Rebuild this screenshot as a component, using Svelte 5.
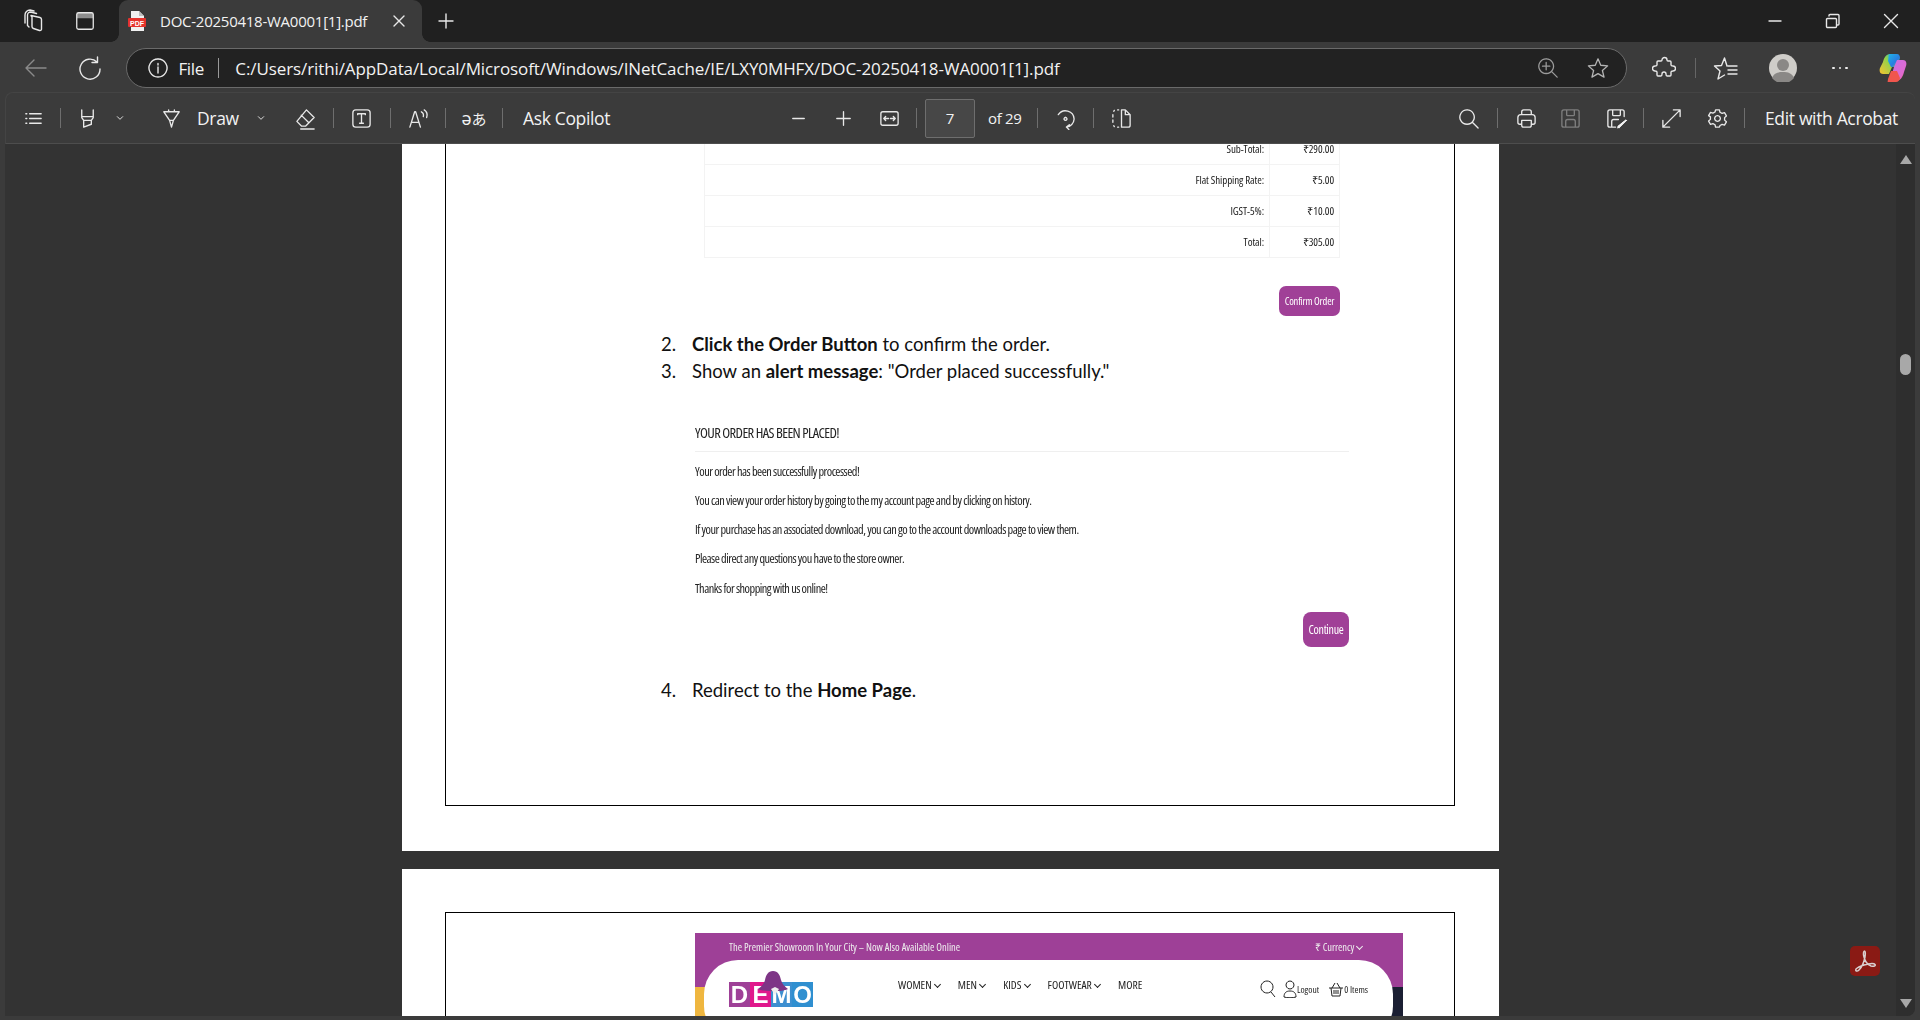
<script>
  const paths = {
    list: "M8 7h12M8 12h12M8 17h12M4 7h1M4 12h1M4 17h1",
    hl: "M6 3v8l2 3h8l2-3V3M6 10h12M8 14v7l8-3v-4",
    chev: "M8 10l4 4 4-4",
    draw: "M4 5h16M4 5l6 9h4l6-9M10 14l2 7 2-7M9 5V3M15 5V3",
    eraser: "M13 3l8 8-9 9H8l-5-5zM7.500 8.500l8 8M7 23h14",
    tbox: "M6 3h12a3 3 0 0 1 3 3v12a3 3 0 0 1-3 3H6a3 3 0 0 1-3-3V6a3 3 0 0 1 3-3zM8 8V7h8v1M12 7v10M10 17h4",
    read: "M3 21l5-16h1l5 16M5 16h7M15 5c2 1 2.500 3 2 5M18 3c3 2 3.500 5 2.500 8",
    minus: "M6 12h12",
    plus: "M5 12h14M12 5v14",
    fit: "M5 5h14a2 2 0 0 1 2 2v10a2 2 0 0 1-2 2H5a2 2 0 0 1-2-2V7a2 2 0 0 1 2-2zM6 12h5M6 12l2-2M6 12l2 2M18 12h-5M18 12l-2-2M18 12l-2 2",
    rotate: "M4.500 8a9 9 0 0 1 16.500 4.500 9 9 0 0 1-8 8.500M13 21l3-2.500M13 21l2.500 2.500M12 11a1.500 1.500 0 1 0 .01 0",
    two: "M12 3h4l5 5v11a2 2 0 0 1-2 2h-7zM16 3v5h5M12 3v18M8 3h1M4.500 3.500 4 4.500M3 8v2.500M3 13.500V16M4 19.500l.5 1M8 21h1",
    search: "M10.500 3a7.500 7.500 0 1 0 .01 0M16 16l6 6",
    print: "M7 8V5a2 2 0 0 1 2-2h6a2 2 0 0 1 2 2v3M7 18H5a2 2 0 0 1-2-2v-5a3 3 0 0 1 3-3h12a3 3 0 0 1 3 3v5a2 2 0 0 1-2 2h-2M7 14h10v5a2 2 0 0 1-2 2H9a2 2 0 0 1-2-2z",
    save: "M5 3h14a2 2 0 0 1 2 2v14a2 2 0 0 1-2 2H5a2 2 0 0 1-2-2V5a2 2 0 0 1 2-2zM8 3v5a1 1 0 0 0 1 1h6a1 1 0 0 0 1-1V3M7 21v-6a2 2 0 0 1 2-2h6a2 2 0 0 1 2 2v6",
    saveas: "M11 21H5a2 2 0 0 1-2-2V5a2 2 0 0 1 2-2h13a2 2 0 0 1 2 2v5M8 3v5a1 1 0 0 0 1 1h6a1 1 0 0 0 1-1V3M7 21v-6a2 2 0 0 1 2-2h5",
    expand: "M14 3h7v7M21 3L3 21M3 14v7h7",
    gear: "M10 3h4l.6 2.500 2.200 1.200 2.500-.8 2 3.400-1.900 1.800v2.600l1.900 1.800-2 3.400-2.500-.8-2.200 1.200L14 21h-4l-.6-2.500-2.200-1.200-2.500.8-2-3.400 1.900-1.800v-2.600L2.700 9l2-3.400 2.500.8 2.200-1.200zM12 9a3 3 0 1 0 .01 0"
  };

  const left = [
    { i: "list", w: 54 }, { s: 1 }, { i: "hl", w: 52 }, { i: "chev", w: 14, sm: 1 }, { g: 18 }, { i: "draw", w: 52 },
    { t: "Draw", w: 42 }, { i: "chev", w: 43, sm: 1 }, { i: "eraser", w: 46 }, { g: 5 }, { s: 1 }, { i: "tbox", w: 54 },
    { g: 2 }, { s: 1 }, { i: "read", w: 54 }, { s: 1 }, { x: "ə", w: 56 }, { s: 1 }, { g: 20 }, { t: "Ask Copilot", w: 88 }
  ];
  const center = [
    { i: "minus", w: 44 }, { i: "plus", w: 46 }, { i: "fit", w: 46 }, { g: 4 }, { s: 1 }, { g: 8 }, { box: "7" }, { g: 13 },
    { t: "of 29", w: 35, small: 1 }, { g: 14 }, { s: 1 }, { i: "rotate", w: 54 }, { g: 1 }, { s: 1 }, { i: "two", w: 54 }
  ];
  const right = [
    { i: "search", w: 44 }, { g: 7 }, { s: 1 }, { i: "print", w: 56 }, { i: "save", w: 32, dim: 1 }, { g: 3 }, { i: "saveas", w: 54 },
    { s: 1 }, { i: "expand", w: 54 }, { i: "gear", w: 38 }, { g: 8 }, { s: 1 }, { g: 20 }, { t: "Edit with Acrobat", w: 133 }
  ];
  const groups = [
    { cls: "left", items: left },
    { cls: "center", items: center },
    { cls: "right", items: right }
  ];

  const totals = [
    { label: "Sub-Total:", value: "₹290.00" },
    { label: "Flat Shipping Rate:", value: "₹5.00" },
    { label: "IGST-5%:", value: "₹10.00" },
    { label: "Total:", value: "₹305.00" }
  ];
  const nav = ["WOMEN", "MEN", "KIDS", "FOOTWEAR"];
</script>

{#snippet icon(name, size = 23)}
  <svg class="ico" width={size} height={size} viewBox="0 0 24 24">
    <path d={paths[name]} />
    {#if name === "saveas"}
      <path class="pen" d="M22 12.500l1.500 1.500-8.500 8.500-3 .5.5-3z" />
    {/if}
  </svg>
{/snippet}

<div class="browser">
  <div class="tabstrip">
    <div class="strip-btn">
      <svg class="ico" width="24" height="24" viewBox="0 0 24 24">
        <path d="M10 6.500l9 2a2 2 0 0 1 1.500 2v9.500a1.500 1.500 0 0 1-2 1.500l-6-2a2 2 0 0 1-1.500-2V7.500a1 1 0 0 1-1-1zM8 18l-1.500-1.500V6a3 3 0 0 1 3-3l6 1.500M4 14V6a5 5 0 0 1 5-5l4 1" />
      </svg>
    </div>
    <div class="strip-btn">
      <svg class="ico" width="22" height="22" viewBox="0 0 24 24">
        <path class="band" d="M3 5a2 2 0 0 1 2-2h14a2 2 0 0 1 2 2v4H3z" />
        <path d="M5 3h14a2 2 0 0 1 2 2v14a2 2 0 0 1-2 2H5a2 2 0 0 1-2-2V5a2 2 0 0 1 2-2z" />
      </svg>
    </div>
    <div class="tab">
      <svg class="pdf" width="18" height="20" viewBox="0 0 18 20">
        <path d="M3 0h8l5 5v15H3z" fill="#f1f1f1" />
        <path d="M11 0l5 5h-5z" fill="#bdbdbd" />
        <rect x="0" y="7" width="18" height="9" rx="1" fill="#e5322d" />
        <text x="9" y="14.500">PDF</text>
      </svg>
      <span class="tab-title">DOC-20250418-WA0001[1].pdf</span>
      <svg class="ico tab-x" width="14" height="14" viewBox="0 0 14 14"><path d="M2 2l10 10M12 2L2 12" /></svg>
    </div>
    <div class="new-tab">{@render icon("plus", 24)}</div>
    <div class="win">
      <div class="win-btn"><svg class="ico" width="16" height="16" viewBox="0 0 16 16"><path d="M2 8h12" /></svg></div>
      <div class="win-btn"><svg class="ico" width="16" height="16" viewBox="0 0 16 16"><path d="M2.500 5.500h8a1 1 0 0 1 1 1v7a1 1 0 0 1-1 1h-8a1 1 0 0 1-1-1v-7a1 1 0 0 1 1-1zM4 3V2.500a1 1 0 0 1 1-1h8a1 1 0 0 1 1 1V11a1 1 0 0 1-1 1h-.5" /></svg></div>
      <div class="win-btn"><svg class="ico" width="16" height="16" viewBox="0 0 16 16"><path d="M1.500 1.500l13 13M14.500 1.500l-13 13" /></svg></div>
    </div>
  </div>

  <div class="addressbar">
    <div class="nav-btn dim">
      <svg class="ico" width="24" height="24" viewBox="0 0 24 24"><path d="M23 12H3M11 4l-8 8 8 8" /></svg>
    </div>
    <div class="nav-btn">
      <svg class="ico" width="24" height="24" viewBox="0 0 24 24"><path d="M19 6a10 10 0 1 0 3 7M19.500 1v5.500H14" /></svg>
    </div>
    <div class="pill">
      <svg class="ico info" width="20" height="20" viewBox="0 0 20 20"><path d="M10 1a9 9 0 1 0 .01 0M10 9v6M10 5.500v1.500" /></svg>
      <span class="file">File</span>
      <span class="pill-sep"></span>
      <span class="url">C:/Users/rithi/AppData/Local/Microsoft/Windows/INetCache/IE/LXY0MHFX/DOC-20250418-WA0001[1].pdf</span>
      <svg class="ico pill-ico" width="22" height="22" viewBox="0 0 24 24"><path d="M10 2a8 8 0 1 0 .01 0M10 6v8M6 10h8M16 16l6 6" /></svg>
      <svg class="ico pill-ico star" width="22" height="22" viewBox="0 0 24 24"><path d="M12 2l3 7 7.500.7-5.700 5 1.800 7.300-6.600-3.900L5.400 22l1.800-7.300-5.700-5L9 9z" /></svg>
    </div>
    <div class="profile">
      <div class="ext">
        <svg class="ico" width="24" height="24" viewBox="0 0 24 24"><path d="M10 4a2.500 2.500 0 0 1 5 0c0 1 0 1 1 1h2a1 1 0 0 1 1 1v3c0 1 1 1 2 1a2.500 2.500 0 0 1 0 5c-1 0-2 0-2 1v3a1 1 0 0 1-1 1h-3c-1 0-1-1-1-2a2 2 0 0 0-4 0c0 1 0 2-1 2H6a1 1 0 0 1-1-1v-3c0-1-1-1-2-1a2.500 2.500 0 0 1 0-5c1 0 2 0 2-1V6a1 1 0 0 1 1-1h3c1 0 1 0 1-1z" /></svg>
      </div>
      <span class="ext-sep"></span>
      <div class="fav">
        <svg class="ico" width="26" height="26" viewBox="0 0 26 26"><path d="M14 11l-2.500-8-3 7.500-7 .5 5.500 5-2 8 6.500-4M15 11h9M15 15h9M15 19h9" /></svg>
      </div>
      <div class="avatar">
        <svg width="28" height="28" viewBox="0 0 28 28">
          <circle cx="14" cy="14" r="14" fill="#cfcdc9" />
          <circle cx="14" cy="11" r="6" fill="#8a8886" />
          <path d="M3 24c2-5 6-6 11-6s9 1 11 6a14 14 0 0 1-22 0z" fill="#8a8886" />
        </svg>
      </div>
      <div class="dots"><i></i><i></i><i></i></div>
      <div class="copilot">
        <svg width="28" height="30" viewBox="0 0 28 30">
          <defs>
            <linearGradient id="cpa" x1="0" y1="0" x2="1" y2="1">
              <stop offset="0" stop-color="#1fb5e8" />
              <stop offset="0.6" stop-color="#2a7de1" />
              <stop offset="1" stop-color="#8bd14f" />
            </linearGradient>
            <linearGradient id="cpb" x1="0" y1="0" x2="1" y2="1">
              <stop offset="0" stop-color="#c86ee6" />
              <stop offset="0.7" stop-color="#e06ad0" />
              <stop offset="1" stop-color="#f5566a" />
            </linearGradient>
            <linearGradient id="cpc" x1="0" y1="1" x2="1" y2="0">
              <stop offset="0" stop-color="#f9c22e" />
              <stop offset="0.6" stop-color="#8ed24c" />
              <stop offset="1" stop-color="#1fb5e8" />
            </linearGradient>
          </defs>
          <path d="M11 1h6l-4 13-3 7H4c-3 0-4-3-3-6l3-6c1-4 3-8 7-8z" fill="url(#cpc)" />
          <path d="M11 1h7c2 0 3 2 3 4l-3 9h-6L9 8c1-4 0-7 2-7z" fill="url(#cpa)" />
          <path d="M18 7h6c3 0 4 3 3 6l-2 6c-1 5-4 9-8 9h-6l4-14z" fill="url(#cpb)" />
          <path d="M9 29h8c2 0 4-2 4-4l-3-7h-6l-3 8c0 2-1 3 0 3z" fill="#f0564d" />
        </svg>
      </div>
    </div>
  </div>

  <div class="toolbar">
    {#each groups as group}
      <div class="group {group.cls}">
        {#each group.items as it}
          {#if it.s}
            <span class="sep"></span>
          {:else if it.g}
            <span class="gap" style="width:{it.g}px"></span>
          {:else if it.t}
            <span class="label" class:small={it.small} style="width:{it.w}px">{it.t}</span>
          {:else if it.x}
            <span class="translate" style="width:{it.w}px">ə<span class="cjk">あ</span></span>
          {:else if it.box}
            <span class="pagebox">{it.box}</span>
          {:else}
            <span class="tool" class:dimmed={it.dim} style="width:{it.w}px">
              {@render icon(it.i, it.sm ? 16 : 23)}
            </span>
          {/if}
        {/each}
      </div>
    {/each}
  </div>

  <div class="viewer">
    <div class="pages">
      <div class="page first">
        <div class="frame">
          <table class="totals shot">
            <tbody>
              {#each totals as row}
                <tr>
                  <td class="lab"><span>{row.label}</span></td>
                  <td class="val"><span>{row.value}</span></td>
                </tr>
              {/each}
            </tbody>
          </table>
          <div class="confirm-row shot">
            <span class="shop-btn confirm"><span>Confirm Order</span></span>
          </div>

          <ol class="steps" start="2">
            <li><b>Click the Order Button</b> to confirm the order.</li>
            <li>Show an <b>alert message</b>: "Order placed successfully."</li>
          </ol>

          <div class="placed shot">
            <h3><span>YOUR ORDER HAS BEEN PLACED!</span></h3>
            <p><span>Your order has been successfully processed!</span></p>
            <p><span>You can view your order history by going to the my account page and by clicking on history.</span></p>
            <p><span>If your purchase has an associated download, you can go to the account downloads page to view them.</span></p>
            <p><span>Please direct any questions you have to the store owner.</span></p>
            <p><span>Thanks for shopping with us online!</span></p>
            <div class="continue-row">
              <span class="shop-btn cont"><span>Continue</span></span>
            </div>
          </div>

          <ol class="steps last" start="4">
            <li>Redirect to the <b>Home Page</b>.</li>
          </ol>
        </div>
      </div>

      <div class="page second">
        <div class="frame top">
          <div class="site shot">
            <div class="site-top">
              <span class="promo">The Premier Showroom In Your City – Now Also Available Online</span>
              <span class="currency">₹ Currency <i class="caret"></i></span>
            </div>
            <div class="site-hero">
              <div class="site-header">
                <div class="logo">
                  <span class="lt d">D</span><span class="lt e">E</span><span class="lt m">M</span><span class="lt o">O</span>
                  <svg class="hat" width="32" height="24" viewBox="0 0 30 24">
                    <path d="M15 0c5 0 7 4 8 9 1 4 4 7 7 9-5 3-25 3-30 0 3-2 6-5 7-9 1-5 3-9 8-9z" fill="#7e3586" />
                    <path d="M13 18l4 6 4-6-4-2z" fill="#eee" />
                  </svg>
                </div>
                <nav>
                  {#each nav as item}
                    <span class="nav-item">{item} <i class="caret"></i></span>
                  {/each}
                  <span class="nav-item">MORE</span>
                </nav>
                <div class="actions">
                  <svg class="site-ico search" width="16" height="18" viewBox="0 0 16 18"><path d="M7 1a6 6 0 1 0 .01 0M11 12l4 5" /></svg>
                  <svg class="site-ico user" width="14" height="18" viewBox="0 0 14 18"><path d="M7 1a4 4 0 1 0 .01 0M1 17c0-4 2-6 6-6s6 2 6 6c-3 1-9 1-12 0z" /></svg>
                  <span class="logout">Logout</span>
                  <svg class="site-ico basket" width="16" height="16" viewBox="0 0 16 16"><path d="M1 7h14M3 7l1 8h8l1-8M4 7l3-5M12 7L9 2M6 9v4M8 9v4M10 9v4" /></svg>
                  <span class="items">0 Items</span>
                </div>
              </div>
            </div>
          </div>
        </div>
      </div>
    </div>

    <div class="scrollbar">
      <span class="arrow up"></span>
      <span class="thumb"></span>
      <span class="arrow down"></span>
    </div>

    <div class="acrobat">
      <svg width="24" height="24" viewBox="0 0 24 24" fill="none" stroke="#d9cfcf" stroke-width="1.500" stroke-linejoin="round">
        <path d="M3 20c-1 2 1 3 3 1 3-3 5-8 6-13 .5-3 .5-6-.5-6s-1.500 3-.5 6c1 4 4 8 7 9 3 .5 5 0 4-1.500s-6-1-11 .5c-3 1-6 2-8 4z" />
      </svg>
    </div>
  </div>
</div>

<style>
  :global(body) {
    background: #3b3b3b;
    overflow: hidden;
  }
  .browser {
    height: 1020px;
    display: flex;
    flex-direction: column;
    background: #3b3b3b;
    color: #f2f2f2;
    font-family: "Open Sans", sans-serif;
    overflow: hidden;
  }
  .ico {
    fill: none;
    stroke: #e8e8e8;
    stroke-width: 1.4;
    stroke-linecap: round;
    stroke-linejoin: round;
    flex: none;
  }
  .ico .band {
    fill: #8d8d8d;
    stroke: none;
  }
  .ico .pen {
    fill: #f2f2f2;
    stroke: #3b3b3b;
    stroke-width: 1;
  }

  /* tab row */
  .tabstrip {
    height: 42px;
    background: #202020;
    display: flex;
    align-items: center;
    padding-left: 7px;
    flex: none;
  }
  .strip-btn {
    width: 52px;
    display: flex;
    justify-content: center;
  }
  .tab {
    position: relative;
    width: 303px;
    height: 42px;
    margin-left: 8px;
    background: #3b3b3b;
    border-radius: 9px 9px 0 0;
    display: flex;
    align-items: center;
    padding-left: 9px;
    box-sizing: border-box;
  }
  .tab::before,
  .tab::after {
    content: "";
    position: absolute;
    bottom: 0;
    width: 8px;
    height: 8px;
    background: radial-gradient(circle at var(--cx) 0, #202020 7.500px, #3b3b3b 8px);
  }
  .tab::before {
    left: -8px;
    --cx: 0;
  }
  .tab::after {
    right: -8px;
    --cx: 100%;
  }
  .pdf text {
    font: 700 7px "Liberation Sans", sans-serif;
    fill: #fff;
    text-anchor: middle;
  }
  .tab-title {
    margin-left: 14px;
    width: 206px;
    font-size: 15px;
    letter-spacing: -0.25px;
    white-space: nowrap;
  }
  .tab-x {
    margin-left: 26px;
  }
  .new-tab {
    margin-left: 4px;
    width: 40px;
    display: flex;
    justify-content: center;
  }
  .win {
    margin-left: auto;
    display: flex;
  }
  .win-btn {
    width: 58px;
    display: flex;
    justify-content: center;
  }

  /* address row */
  .addressbar {
    height: 50px;
    display: flex;
    align-items: center;
    padding: 6px 4px 4px 8px;
    box-sizing: border-box;
    flex: none;
  }
  .nav-btn {
    width: 55px;
    display: flex;
    justify-content: center;
  }
  .nav-btn.dim .ico {
    stroke: #8a8a8a;
  }
  .pill {
    width: 1501px;
    height: 40px;
    margin-left: 8px;
    box-sizing: border-box;
    border: 1.500px solid #6a6a6a;
    border-radius: 20px;
    background: #222;
    display: flex;
    align-items: center;
    padding-left: 21px;
    flex: none;
  }
  .file {
    margin-left: 11px;
    font-size: 17px;
    letter-spacing: -0.4px;
  }
  .pill-sep {
    width: 1.500px;
    height: 20px;
    background: #9a9a9a;
    margin: 0 16px 0 14px;
    flex: none;
  }
  .url {
    width: 825px;
    font-size: 17px;
    letter-spacing: -0.1px;
    white-space: nowrap;
  }
  .pill-ico {
    stroke: #9b9b9b;
    margin-left: 477px;
  }
  .pill-ico.star {
    stroke: #b5b5b5;
    margin-left: 28px;
  }
  .profile {
    display: flex;
    align-items: center;
    margin-left: 10px;
  }
  .ext {
    width: 54px;
    display: flex;
    justify-content: center;
  }
  .ext-sep {
    width: 1.500px;
    height: 20px;
    background: #666;
    margin-left: 4px;
  }
  .fav {
    width: 60px;
    display: flex;
    justify-content: center;
  }
  .avatar {
    width: 54px;
    display: flex;
    justify-content: center;
  }
  .dots {
    width: 60px;
    display: flex;
    justify-content: center;
    gap: 4px;
  }
  .dots i {
    width: 2.500px;
    height: 2.500px;
    border-radius: 50%;
    background: #eee;
  }
  .copilot {
    width: 46px;
    display: flex;
    justify-content: center;
  }

  /* pdf toolbar */
  .toolbar {
    height: 52px;
    margin-left: 5px;
    margin-right: 5px;
    display: flex;
    align-items: center;
    border-top: 1px solid #444;
    border-left: 1px solid #444;
    border-bottom: 1px solid #4d4d4d;
    border-radius: 8px 8px 0 0;
    box-sizing: border-box;
    flex: none;
  }
  .group {
    display: flex;
    align-items: center;
  }
  .group.center {
    margin-left: 165px;
  }
  .group.right {
    margin-left: 298px;
  }
  .sep {
    width: 1px;
    height: 20px;
    background: #6e6e6e;
    flex: none;
  }
  .gap {
    flex: none;
  }
  .tool {
    display: flex;
    justify-content: center;
    flex: none;
  }
  .tool.dimmed .ico {
    stroke: #7e7e7e;
  }
  .label {
    font-size: 17.500px;
    letter-spacing: -0.35px;
    white-space: nowrap;
    flex: none;
  }
  .label.small {
    font-size: 15px;
  }
  .translate {
    font-size: 18px;
    text-align: center;
    flex: none;
  }
  .cjk {
    font-family: "Noto Sans CJK JP", sans-serif;
    font-size: 15px;
  }
  .pagebox {
    width: 50px;
    height: 39px;
    box-sizing: border-box;
    background: #474747;
    border: 1px solid #6e6e6e;
    border-radius: 2px;
    display: flex;
    align-items: center;
    justify-content: center;
    font-size: 15px;
    flex: none;
  }

  /* document */
  .viewer {
    position: relative;
    height: 872px;
    margin: 0 5px 4px;
    background: #333;
    display: flex;
    border-radius: 0 0 8px 0;
    overflow: hidden;
    flex: none;
  }
  .pages {
    width: 1891px;
    overflow: hidden;
    padding-left: 397px;
    box-sizing: border-box;
    flex: none;
  }
  .page {
    width: 1097px;
    background: #fff;
    color: #111;
    box-sizing: border-box;
    padding: 0 44px 0 43px;
  }
  .page.first {
    height: 707px;
  }
  .page.second {
    margin-top: 18px;
    height: 300px;
    padding-top: 43px;
  }
  .frame {
    border: 1px solid #000;
    border-top: 0;
    height: 662px;
    box-sizing: border-box;
    overflow: hidden;
  }
  .frame.top {
    border-top: 1px solid #000;
    border-bottom: 0;
    height: 300px;
    padding-top: 20px;
  }
  .shot {
    font-family: "Open Sans", sans-serif;
    font-stretch: 75%;
    color: #222;
    filter: blur(0.3px);
  }
  .shot span {
    white-space: nowrap;
  }

  .totals {
    width: 636px;
    margin: -11px 0 0 258px;
    border-collapse: collapse;
    font-size: 11px;
    letter-spacing: -0.1px;
  }
  .totals td {
    height: 31px;
    padding: 0 5px;
    border: 1px solid #f3f3f3;
    border-top: 0;
    text-align: right;
    box-sizing: border-box;
  }
  .totals .val {
    width: 70px;
  }
  .confirm-row {
    width: 894px;
    display: flex;
    justify-content: flex-end;
    margin-top: 28px;
  }
  .shop-btn {
    background: #a04097;
    color: #fff;
    display: flex;
    align-items: center;
    justify-content: center;
    box-sizing: border-box;
  }
  .confirm {
    width: 61px;
    height: 30px;
    border-radius: 7px;
    font-size: 10.500px;
    letter-spacing: -0.2px;
  }
  .cont {
    width: 46px;
    height: 35px;
    border-radius: 8px;
    font-size: 12px;
    letter-spacing: -0.3px;
  }
  .steps {
    margin: 15px 0 0;
    padding: 0 0 0 215px;
    list-style: none;
    font-family: Lato, sans-serif;
    font-size: 18.500px;
    line-height: 27px;
    color: #111;
  }
  .steps li::before {
    content: counter(list-item) ".";
    display: inline-block;
    width: 31px;
  }
  .steps.last {
    margin-top: 30px;
  }
  .placed {
    margin: 35px 0 0 249px;
    width: 654px;
  }
  .placed h3 {
    margin: 0;
    height: 32px;
    font-size: 14.500px;
    font-weight: 400;
    letter-spacing: -0.6px;
    line-height: 26px;
    border-bottom: 1px solid #efefef;
    box-sizing: border-box;
  }
  .placed p {
    margin: 0;
    height: 29.300px;
    line-height: 40px;
    font-size: 12.300px;
    letter-spacing: -0.5px;
  }
  .continue-row {
    display: flex;
    justify-content: flex-end;
    margin-top: 14.500px;
  }

  /* the shop page pasted in page two */
  .site {
    margin-left: 249px;
    width: 708px;
    color: #222;
  }
  .site-top {
    height: 27px;
    background: #9e4097;
    color: #eee;
    display: flex;
    align-items: center;
    justify-content: space-between;
    padding: 0 41px 0 34px;
    font-size: 10.500px;
  }
  .currency {
    letter-spacing: -0.1px;
  }
  .caret {
    display: inline-block;
    width: 4px;
    height: 4px;
    margin: 0 0 2px 1px;
    border-right: 1px solid currentColor;
    border-bottom: 1px solid currentColor;
    transform: rotate(45deg);
  }
  .site-hero {
    height: 80px;
    padding: 0 10px 0 9px;
    background:
      linear-gradient(#9e4097 27px, transparent 27px),
      linear-gradient(90deg, #efb63f 50%, #1b1f33 50%);
  }
  .site-header {
    height: 80px;
    background: #fff;
    border-radius: 34px;
    display: flex;
    padding: 0 25px;
    position: relative;
  }
  .logo {
    position: relative;
    display: flex;
    height: 25px;
    margin-top: 22px;
    font: 700 24px/25px "Liberation Sans", sans-serif;
    color: #fff;
  }
  .lt {
    width: 21px;
    text-align: center;
  }
  .d { background: #9e4097; }
  .e { background: #e0188c; }
  .m { background: #3d8fd0; }
  .o { background: #2f8fd0; }
  .hat {
    position: absolute;
    left: 28px;
    top: -11px;
  }
  nav {
    display: flex;
    gap: 18px;
    margin: 17px 0 0 85px;
    font-size: 11.500px;
    font-weight: 500;
  }
  .actions {
    margin: 17px 0 0 auto;
    display: flex;
    align-items: center;
    height: 24px;
    font-size: 9.500px;
  }
  .site-ico {
    fill: none;
    stroke: #222;
    stroke-width: 1;
  }
  .site-ico.search {
    margin-right: 0;
  }
  .site-ico.user {
    margin-left: 7px;
  }
  .site-ico.basket {
    margin-left: 9px;
  }

  /* scrollbar and the acrobat button */
  .scrollbar {
    width: 19px;
    background: #2e2e2e;
    display: flex;
    flex-direction: column;
    align-items: center;
    padding: 11px 0 8px;
    box-sizing: border-box;
    flex: none;
  }
  .arrow {
    width: 0;
    height: 0;
    border-left: 6px solid transparent;
    border-right: 6px solid transparent;
  }
  .arrow.up {
    border-bottom: 9px solid #a8a8a8;
  }
  .arrow.down {
    border-top: 9px solid #a8a8a8;
    margin-top: auto;
  }
  .thumb {
    width: 11px;
    height: 21px;
    margin-top: 190px;
    border-radius: 6px;
    background: #a8a8a8;
  }
  .acrobat {
    position: absolute;
    left: 1845px;
    top: 802px;
    width: 30px;
    height: 30px;
    border-radius: 5px;
    background: #8a1a14;
    display: flex;
    align-items: center;
    justify-content: center;
  }
</style>
